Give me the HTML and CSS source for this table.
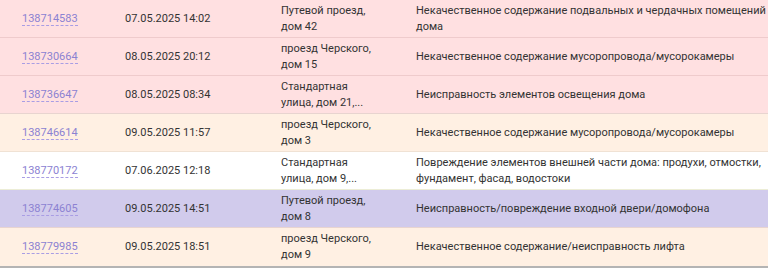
FILE: index.html
```html
<!DOCTYPE html>
<html lang="ru">
<head>
<meta charset="utf-8">
<link rel="stylesheet" href="styles.css">
</head>
<body>
<div class="wrap">
<table class="grid">
  <colgroup>
    <col class="c-id"><col class="c-date"><col class="c-addr"><col class="c-desc">
  </colgroup>
  <tbody>
    <tr class="r-pink">
      <td class="id"><a href="#">138714583</a></td>
      <td>07.05.2025 14:02</td>
      <td>Путевой проезд, дом 42</td>
      <td>Некачественное содержание подвальных и чердачных помещений дома</td>
    </tr>
    <tr class="r-pink">
      <td class="id"><a href="#">138730664</a></td>
      <td>08.05.2025 20:12</td>
      <td>проезд Черского, дом 15</td>
      <td>Некачественное содержание мусоропровода/мусорокамеры</td>
    </tr>
    <tr class="r-pink">
      <td class="id"><a href="#">138736647</a></td>
      <td>08.05.2025 08:34</td>
      <td>Стандартная улица, дом&nbsp;21,...</td>
      <td>Неисправность элементов освещения дома</td>
    </tr>
    <tr class="r-peach">
      <td class="id"><a href="#">138746614</a></td>
      <td>09.05.2025 11:57</td>
      <td>проезд Черского, дом 3</td>
      <td>Некачественное содержание мусоропровода/мусорокамеры</td>
    </tr>
    <tr class="r-white">
      <td class="id"><a href="#">138770172</a></td>
      <td>07.06.2025 12:18</td>
      <td>Стандартная улица, дом&nbsp;9,...</td>
      <td>Повреждение элементов внешней части дома: продухи, отмостки, фундамент, фасад, водостоки</td>
    </tr>
    <tr class="r-purple">
      <td class="id"><a href="#">138774605</a></td>
      <td>09.05.2025 14:51</td>
      <td>Путевой проезд, дом 8</td>
      <td>Неисправность/повреждение входной двери/домофона</td>
    </tr>
    <tr class="r-peach last">
      <td class="id"><a href="#">138779985</a></td>
      <td>09.05.2025 18:51</td>
      <td>проезд Черского, дом 9</td>
      <td>Некачественное содержание/неисправность лифта</td>
    </tr>
  </tbody>
</table>
</div>
</body>
</html>
```
FILE: styles.css
```css
html, body {
  margin: 0;
  padding: 0;
  background: #ffffff;
  overflow: hidden;
}
body {
  width: 768px;
  height: 270px;
  font-family: Roboto, "Noto Sans", sans-serif;
  font-size: 11px;
  color: #333333;
}
.wrap {
  margin-top: -1px;
  width: 768px;
}
.grid {
  border-collapse: collapse;
  table-layout: fixed;
  width: 768px;
  border-bottom: 2px solid #b4b4b4;
}
.c-id { width: 117px; }
.c-date { width: 156px; }
.c-addr { width: 135px; }
.c-desc { width: 360px; }
.grid td {
  height: 37px;
  box-sizing: border-box;
  padding: 3px 8px;
  line-height: 15.5px;
  vertical-align: middle;
  border-top: 1px solid rgba(120, 60, 60, 0.12);
}
.grid td:nth-child(3) { padding-right: 27px; }
.grid td:nth-child(4) { padding-right: 0; }
.grid td.id { padding-left: 22px; }
.grid tr.last td { height: 39px; }
.id a {
  color: #8c82d2;
  text-decoration: none;
  border-bottom: 1px dashed #a99de4;
}
.r-pink { background: #ffe0e1; }
.r-peach { background: #fff0e3; }
.r-white { background: #ffffff; }
.r-purple { background: #d1cbec; }
.r-white td { border-top-color: #f0e2d4; }
.r-purple td { border-top-color: #ecedd6; }
.r-peach td { border-top-color: #e8d4d0; }
```
